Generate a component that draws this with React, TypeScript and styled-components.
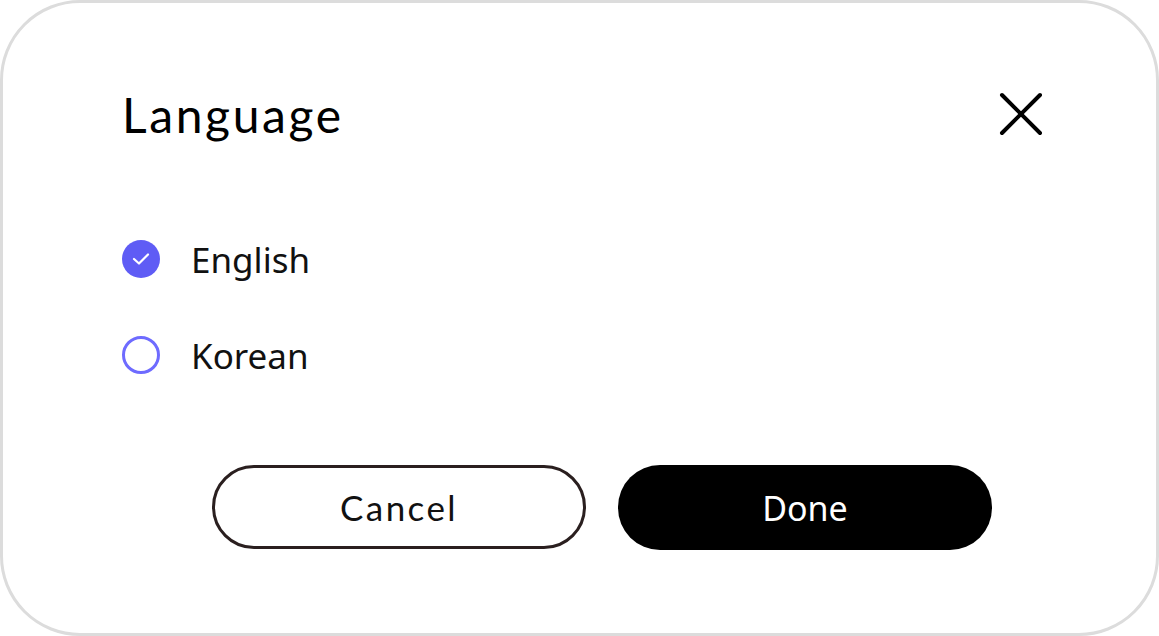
import * as React from "react";
import { useState } from "react";
import styled, { createGlobalStyle } from "styled-components";

const GlobalStyle = createGlobalStyle`
  html, body {
    margin: 0;
    padding: 0;
    background: #ffffff;
  }
  * {
    box-sizing: border-box;
  }
`;

const languages = ["English", "Korean"];

const App = () => {
  const [selected, setSelected] = useState("English");

  return (
    <>
      <GlobalStyle />
      <Card>
        <Header>
          <Title>Language</Title>
          <CloseBtn aria-label="close">
            <svg width="44" height="44" viewBox="0 0 44 44">
              <path
                d="M3 3 L41 41 M41 3 L3 41"
                stroke="#000"
                strokeWidth="4"
                strokeLinecap="round"
              />
            </svg>
          </CloseBtn>
        </Header>
        <Options>
          {languages.map((lang) => (
            <Option key={lang} onClick={() => setSelected(lang)}>
              <Radio checked={selected === lang}>
                {selected === lang ? (
                  <svg width="18" height="14" viewBox="0 0 18 14">
                    <path
                      d="M2 7 L7 11.5 L16 2.5"
                      stroke="#fff"
                      strokeWidth="2.2"
                      fill="none"
                      strokeLinecap="round"
                      strokeLinejoin="round"
                    />
                  </svg>
                ) : null}
              </Radio>
              <Label>{lang}</Label>
            </Option>
          ))}
        </Options>
        <Buttons>
          <CancelBtn>Cancel</CancelBtn>
          <DoneBtn>Done</DoneBtn>
        </Buttons>
      </Card>
    </>
  );
};

export default App;

const Card = styled.div`
  width: 1159px;
  height: 636px;
  background: #fff;
  border: 3px solid #dcdcdc;
  border-radius: 80px;
  padding: 0 113px 0 119px;
  display: flex;
  flex-direction: column;
`;

const Header = styled.div`
  display: flex;
  align-items: center;
  justify-content: space-between;
  margin-top: 80px;
  height: 62px;
`;

const Title = styled.div`
  font-family: Lato, "Liberation Sans", sans-serif;
  font-size: 48px;
  font-weight: 400;
  color: #000;
  letter-spacing: 2.6px;
`;

const CloseBtn = styled.button`
  background: none;
  border: none;
  padding: 0;
  width: 44px;
  height: 44px;
  display: flex;
  cursor: pointer;
`;

const Options = styled.div`
  display: flex;
  flex-direction: column;
  gap: 58px;
  margin-top: 95px;
`;

const Option = styled.div`
  display: flex;
  align-items: center;
  gap: 32px;
  height: 38px;
  cursor: pointer;
`;

const Radio = styled.div<{ checked: boolean }>`
  width: 38px;
  height: 38px;
  border-radius: 50%;
  display: flex;
  align-items: center;
  justify-content: center;
  background: ${(p) => (p.checked ? "#5f5cf5" : "#fff")};
  border: ${(p) => (p.checked ? "none" : "3px solid #6e6bff")};
`;

const Label = styled.div`
  font-family: "Noto Sans", "Open Sans", sans-serif;
  font-size: 35px;
  color: #111;
  margin-left: -1px;
`;

const Buttons = styled.div`
  display: flex;
  gap: 32px;
  margin-top: 91px;
  margin-left: 90px;
`;

const CancelBtn = styled.button`
  width: 374px;
  height: 84px;
  border-radius: 42px;
  border: 3px solid #2a1f1f;
  background: #fff;
  font-family: Lato, "Liberation Sans", sans-serif;
  font-size: 35px;
  color: #111;
  letter-spacing: 2.4px;
  cursor: pointer;
`;

const DoneBtn = styled.button`
  width: 374px;
  height: 85px;
  border-radius: 42px;
  border: none;
  background: #000;
  font-family: "Noto Sans", "Open Sans", sans-serif;
  font-size: 34px;
  color: #fff;
  cursor: pointer;
`;
